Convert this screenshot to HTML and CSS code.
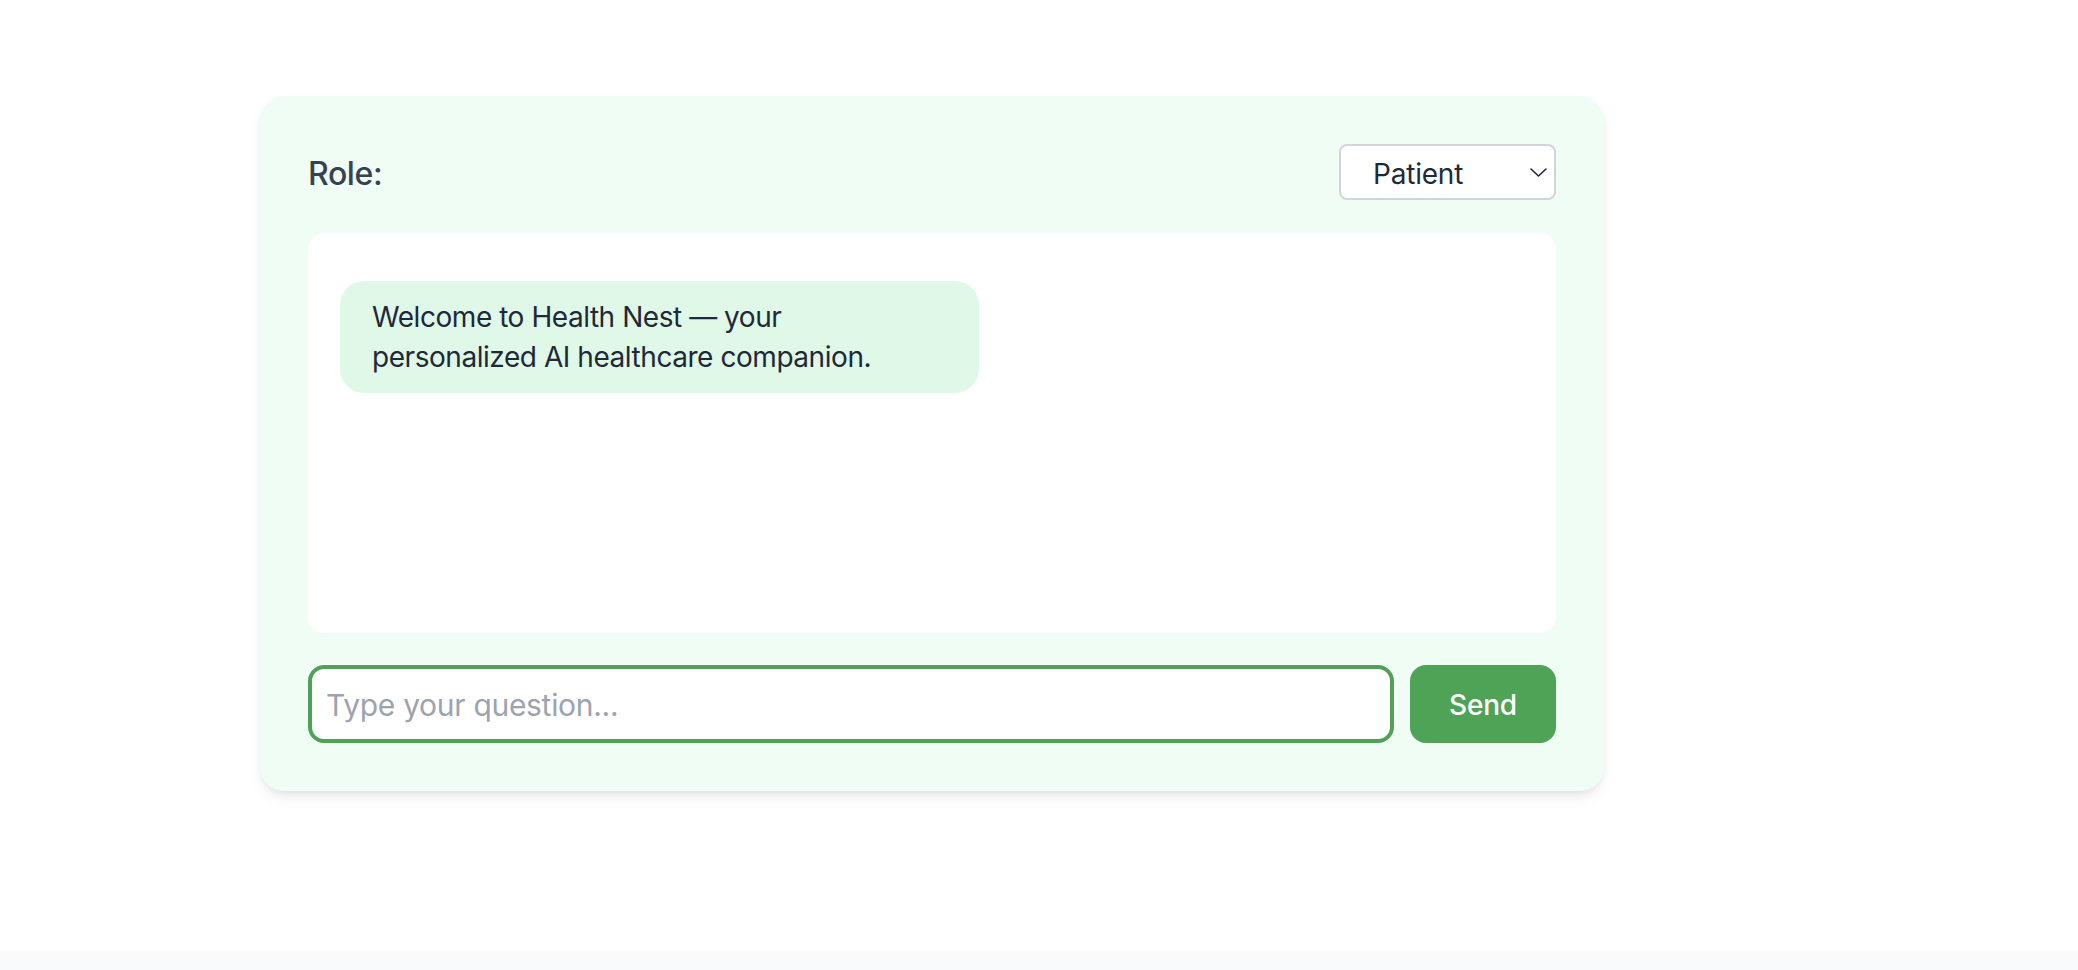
FILE: index.html
```html
<!DOCTYPE html>
<html lang="en">
<head>
<meta charset="utf-8">
<title>Health Nest</title>
<link rel="stylesheet" href="styles.css">
</head>
<body>
<main class="page">
  <section class="card">
    <div class="header">
      <label class="role-label" for="role">Role:</label>
      <div class="select-wrap">
        <select id="role" class="role-select">
          <option>Patient</option>
          <option>Doctor</option>
          <option>Caregiver</option>
        </select>
        <svg class="chevron" width="17" height="9" viewBox="0 0 17 9" fill="none" stroke="#1f2937" stroke-width="1.6" stroke-linecap="round" stroke-linejoin="round"><path d="M1 1l7.5 7 7.5-7"/></svg>
      </div>
    </div>
    <div class="chat">
      <div class="bubble">Welcome to Health Nest — your personalized AI healthcare companion.</div>
    </div>
    <form class="composer">
      <input class="question" type="text" placeholder="Type your question...">
      <button class="send" type="button">Send</button>
    </form>
  </section>
</main>
<footer class="footer"></footer>
</body>
</html>
```

FILE: styles.css
```css
* { box-sizing: border-box; }
html, body { margin: 0; padding: 0; }
body {
  font-family: "Inter", "Liberation Sans", sans-serif;
  background: #f9fafb;
  color: #1f2937;
}
.page {
  background: #ffffff;
  height: 951px;
  padding: 96px 0 0 260px;
}
.footer {
  height: 19px;
  background: #f9fafb;
}
.card {
  width: 1344px;
  background: #f0fdf4;
  border-radius: 24px;
  padding: 48px;
  box-shadow: 0 8px 16px -4px rgba(0,0,0,0.10), 0 3px 6px -2px rgba(0,0,0,0.06);
}
.header {
  display: flex;
  align-items: center;
  justify-content: space-between;
  height: 56px;
}
.role-label {
  font-size: 32px;
  font-weight: 500;
  color: #374151;
  letter-spacing: -0.4px;
  padding-top: 3px;
}
.select-wrap {
  position: relative;
}
.role-select {
  appearance: none;
  -webkit-appearance: none;
  width: 217px;
  height: 56px;
  border: 2px solid #d1d5db;
  border-radius: 8px;
  background: #ffffff;
  padding: 3px 40px 0 32px;
  font-family: inherit;
  font-size: 28px;
  color: #1f2937;
  letter-spacing: -0.2px;
}
.chevron {
  position: absolute;
  right: 9px;
  top: 24px;
  pointer-events: none;
}
.chat {
  margin-top: 33px;
  height: 400px;
  background: #ffffff;
  border-radius: 16px;
  padding: 48px 32px 32px;
}
.bubble {
  max-width: 639px;
  background: #e0f8e8;
  border-radius: 24px;
  padding: 16px 32px;
  font-size: 28px;
  line-height: 40px;
  color: #1f2937;
  letter-spacing: -0.45px;
}
.composer {
  margin-top: 32px;
  display: flex;
  gap: 16px;
  margin-bottom: 0;
}
.question {
  flex: 1;
  height: 78px;
  border: 4px solid #4fa357;
  border-radius: 16px;
  box-shadow: 0 0 0 1px #ffffff;
  padding: 2px 14px 0;
  font-family: inherit;
  font-size: 30px;
  color: #1f2937;
  background: #ffffff;
  outline: none;
  letter-spacing: -0.3px;
}
.question::placeholder {
  color: #9ca3af;
}
.send {
  width: 146px;
  height: 78px;
  border: none;
  border-radius: 16px;
  background: #4fa357;
  color: #ffffff;
  font-family: inherit;
  font-size: 28px;
  font-weight: 500;
  letter-spacing: -0.2px;
  padding-top: 2px;
}
```
